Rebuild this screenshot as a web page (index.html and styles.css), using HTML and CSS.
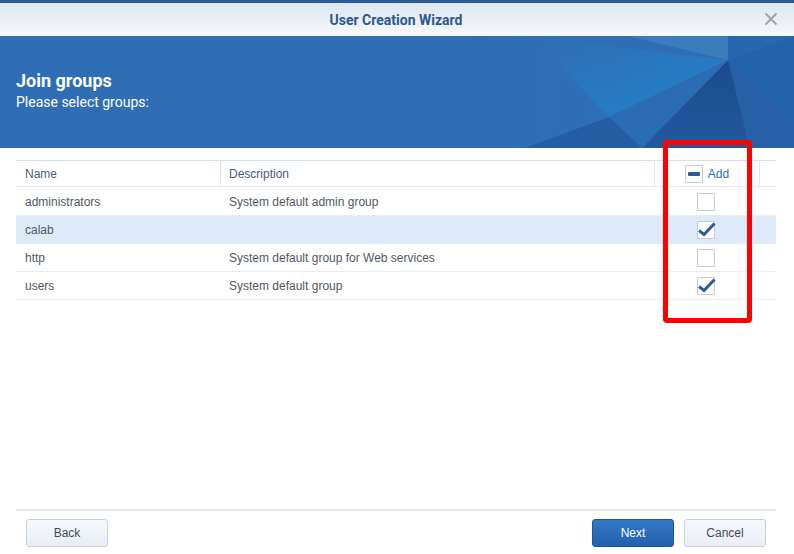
FILE: index.html
```html
<!DOCTYPE html>
<html>
<head>
<meta charset="utf-8">
<link rel="stylesheet" href="styles.css">
</head>
<body>
<div class="window">
  <div class="titlebar">
    <span class="title">User Creation Wizard</span>
    <svg class="close" width="14" height="14" viewBox="0 0 14 14"><path d="M1.5 1.5L12.5 12.5M12.5 1.5L1.5 12.5" stroke="#9aa1a9" stroke-width="1.8" fill="none"/></svg>
  </div>
  <div class="banner">
    <svg class="banner-art" width="794" height="112" viewBox="0 0 794 112" preserveAspectRatio="none">
      <defs>
        <linearGradient id="g1" x1="0" y1="0" x2="1" y2="1">
          <stop offset="0" stop-color="#2f6db4"/>
          <stop offset="1" stop-color="#2283cb"/>
        </linearGradient>
        <linearGradient id="g2" x1="0" y1="0" x2="0" y2="1">
          <stop offset="0" stop-color="#1b4b8f"/>
          <stop offset="1" stop-color="#23589c"/>
        </linearGradient>
        <linearGradient id="g3" x1="0" y1="0" x2="1" y2="0">
          <stop offset="0" stop-color="#2f6db4"/>
          <stop offset="1" stop-color="#2d70b7"/>
        </linearGradient>
      </defs>
      <polygon points="450,0 530,0 609,81 525,112 505,112" fill="url(#g3)"/>
      <polygon points="530,0 728,24 609,81" fill="url(#g1)"/>
      <polygon points="627,0 728,0 728,24" fill="#3b7cbd"/>
      <polygon points="728,0 794,0 728,24" fill="#2768b0"/>
      <polygon points="728,24 794,0 794,82" fill="#2363ab"/>
      <polygon points="728,24 794,82 794,112 750,112" fill="#2760a6"/>
      <polygon points="728,24 642,112 750,112" fill="url(#g2)"/>
      <polygon points="609,81 728,24 642,112" fill="#2b6db5"/>
      <polygon points="609,81 642,112 525,112" fill="#265ca1"/>
    </svg>
    <div class="banner-text">
      <div class="banner-title">Join groups</div>
      <div class="banner-sub">Please select groups:</div>
    </div>
  </div>
  <div class="content">
    <div class="grid">
      <div class="hcell">Name</div>
      <div class="hcell sep">Description</div>
      <div class="hcell sep add-head"><span class="cb partial"><span class="dash"></span></span><span class="add-label">Add</span></div>
      <div class="hcell sep"></div>

      <div class="cell">administrators</div>
      <div class="cell">System default admin group</div>
      <div class="cell center"><span class="cb"></span></div>
      <div class="cell"></div>

      <div class="cell sel">calab</div>
      <div class="cell sel"></div>
      <div class="cell sel center"><span class="cb"><svg class="tick" width="20" height="16" viewBox="0 0 20 16"><path d="M2 9.5L7 13.5L17.5 2.5" stroke="#2b5c98" stroke-width="3" fill="none" stroke-linejoin="miter"/></svg></span></div>
      <div class="cell sel"></div>

      <div class="cell">http</div>
      <div class="cell">System default group for Web services</div>
      <div class="cell center"><span class="cb"></span></div>
      <div class="cell"></div>

      <div class="cell">users</div>
      <div class="cell">System default group</div>
      <div class="cell center"><span class="cb"><svg class="tick" width="20" height="16" viewBox="0 0 20 16"><path d="M2 9.5L7 13.5L17.5 2.5" stroke="#2b5c98" stroke-width="3" fill="none" stroke-linejoin="miter"/></svg></span></div>
      <div class="cell"></div>
    </div>
  </div>
  <div class="footer">
    <button class="btn">Back</button>
    <div class="spacer"></div>
    <button class="btn primary">Next</button>
    <button class="btn">Cancel</button>
  </div>
  <div class="highlight"></div>
</div>
</body>
</html>
```
FILE: styles.css
```css
* { box-sizing: border-box; }
html, body { margin: 0; padding: 0; }
body {
  width: 794px;
  height: 554px;
  background: #fff;
  font-family: "Liberation Sans", Arial, sans-serif;
  overflow: hidden;
}
.window {
  position: relative;
  height: 554px;
  display: flex;
  flex-direction: column;
}
.titlebar {
  height: 36px;
  border-top: 3px solid #2b5b95;
  background: linear-gradient(#dfe6ef, #f6f8fa);
  display: flex;
  align-items: center;
  justify-content: center;
  position: relative;
}
.title {
  font-family: Roboto, "Liberation Sans", sans-serif;
  font-weight: 700;
  font-size: 14px;
  color: #2c5791;
  padding-right: 2px;
}
.close {
  position: absolute;
  right: 16px;
  top: 9px;
}
.banner {
  height: 112px;
  background: #2f6db4;
  position: relative;
  overflow: hidden;
  display: flex;
  align-items: center;
}
.banner-art {
  position: absolute;
  left: 0;
  top: 0;
}
.banner-text {
  position: relative;
  padding-left: 16px;
  padding-bottom: 2px;
  font-family: Roboto, "Liberation Sans", sans-serif;
  color: #fff;
}
.banner-title {
  font-size: 18px;
  font-weight: 700;
  line-height: 20px;
}
.banner-sub {
  font-size: 14px;
  line-height: 18px;
  margin-top: 2px;
}
.content {
  flex: 1;
  padding: 12px 18px 0 16px;
}
.grid {
  display: grid;
  grid-template-columns: 204px 434px 105px 17px;
  grid-auto-rows: 28px;
  font-size: 12px;
  color: #4f5864;
}
.hcell {
  height: 27px;
  border-top: 1px solid #d3dfec;
  border-bottom: 1px solid #e3e8ee;
  display: flex;
  align-items: center;
  padding-left: 9px;
  color: #4a5d7c;
}
.hcell.sep { border-left: 1px solid #dae4ef; padding-left: 8px; }
.add-head {
  justify-content: center;
  padding-left: 0 !important;
  gap: 5px;
}
.add-label { color: #2e6bb0; }
.cell {
  height: 28px;
  border-bottom: 1px solid #e8ecf0;
  display: flex;
  align-items: center;
  padding-left: 9px;
}
.cell.sel { background: #deeaf9; }
.cell.center { justify-content: center; padding-left: 0; padding-right: 2px; }
.cb {
  width: 18px;
  height: 18px;
  border: 1px solid #c2cad4;
  background: #fff;
  border-radius: 1px;
  position: relative;
  display: inline-block;
}
.cb.partial { display: inline-flex; align-items: center; justify-content: center; }
.dash {
  width: 12px;
  height: 4px;
  background: #2b5c98;
  border-radius: 1px;
}
.tick {
  position: absolute;
  left: -1px;
  top: -1px;
}
.footer {
  margin: 0 18px 0 16px;
  border-top: 2px solid #e5e8eb;
  padding: 8px 10px 8px 10px;
  display: flex;
  gap: 10px;
  height: 45px;
}
.spacer { flex: 1; }
.btn {
  width: 82px;
  height: 28px;
  border: 1px solid #c8d0d9;
  border-radius: 3px;
  background: linear-gradient(#f6f9fc, #e8eef4);
  font-family: "Liberation Sans", Arial, sans-serif;
  font-size: 12px;
  color: #3f4b59;
  padding: 0;
}
.btn.primary {
  background: linear-gradient(#3479c6, #2360ad);
  border-color: #1f5599;
  color: #fff;
}
.highlight {
  position: absolute;
  left: 663px;
  top: 140px;
  width: 89px;
  height: 183px;
  border: 5px solid #ff0000;
  border-radius: 4px;
}
```
